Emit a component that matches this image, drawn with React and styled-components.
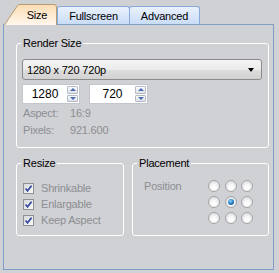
import React from 'react';
import styled, { createGlobalStyle } from 'styled-components';

const BG = '#d0d1d5';

const GlobalStyle = createGlobalStyle`
  html, body {
    margin: 0;
    padding: 0;
    background: ${BG};
  }
  body {
    font-family: "Liberation Sans", Arial, sans-serif;
    font-size: 11px;
    letter-spacing: -0.2px;
    color: #000;
  }
`;

const Window = styled.div`
  width: 279px;
  height: 273px;
  box-sizing: border-box;
  padding: 4px 0 0 3px;
  background: ${BG};
`;

const TabStrip = styled.div`
  position: relative;
  z-index: 1;
  display: flex;
  align-items: flex-end;
  height: 21px;
  margin-bottom: -1px;
  padding-left: 1px;
`;

const ActiveTab = styled.div`
  position: relative;
  width: 53px;
  height: 21px;
  box-sizing: border-box;
  padding-left: 13px;
  display: flex;
  align-items: center;
  justify-content: center;
  svg {
    position: absolute;
    left: 0;
    top: 0;
  }
  span {
    position: relative;
  }
`;

const Tab = styled.div`
  width: ${p => p.$w}px;
  height: 18px;
  margin-bottom: 1px;
  box-sizing: border-box;
  border: 1px solid #87a9dc;
  border-bottom: none;
  border-radius: 3px 3px 0 0;
  background: linear-gradient(#eaf1fd, #c9dcf7);
  display: flex;
  align-items: center;
  justify-content: center;
  & + & {
    margin-left: -1px;
  }
`;

const Panel = styled.div`
  width: 271px;
  height: 246px;
  box-sizing: border-box;
  border: 1px solid #7f9dc6;
  padding: 18px 4px 0 12px;
`;

const Group = styled.div`
  border: 1px solid #fff;
  border-radius: 3px;
  padding: ${p => p.$pad || '0 6px 8px 5px'};
  width: ${p => (p.$w ? `${p.$w}px` : 'auto')};
  flex: ${p => (p.$w ? 'none' : 1)};
  box-sizing: border-box;
`;

// indent is measured from the content box, so it may pull back over the padding
const GroupTitle = styled.div`
  margin: -8px 0 0 ${p => p.$indent}px;
  padding: 0 2px;
  width: fit-content;
  line-height: 14px;
  background: ${BG};
`;

const Select = styled.div`
  margin-top: 9px;
  height: 21px;
  box-sizing: border-box;
  border: 1px solid #8b8b8b;
  border-radius: 3px;
  background: linear-gradient(#f4f4f4, #ebebeb 50%, #dedede 50%, #d2d2d2);
  display: flex;
  align-items: center;
  justify-content: space-between;
  padding: 0 7px 0 4px;
`;

const DropArrow = styled.div`
  width: 0;
  height: 0;
  border-left: 3.5px solid transparent;
  border-right: 3.5px solid transparent;
  border-top: 4px solid #000;
`;

const SpinRow = styled.div`
  display: flex;
  gap: 9px;
  margin-top: 4px;
`;

const SpinBox = styled.div`
  display: flex;
  width: ${p => p.$w || 58}px;
  height: 20px;
  box-sizing: border-box;
  border: 1px solid #c3c6cc;
  background: #fff;
`;

const SpinInput = styled.div`
  flex: 1;
  display: flex;
  align-items: center;
  justify-content: center;
  font-size: 12px;
  letter-spacing: 0;
`;

const SpinButtons = styled.div`
  width: 11px;
  display: flex;
  flex-direction: column;
  gap: 1px;
  padding: 1px 1px 1px 0;
`;

const SpinButton = styled.div`
  flex: 1;
  border: 1px solid #b6bac2;
  border-radius: 1px;
  background: linear-gradient(#f9fafc, #dde2ea);
  display: flex;
  align-items: center;
  justify-content: center;
`;

const SpinArrow = styled.div`
  width: 0;
  height: 0;
  border-left: 3px solid transparent;
  border-right: 3px solid transparent;
  ${p => (p.$down ? 'border-top: 3px solid #4a6cb3;' : 'border-bottom: 3px solid #4a6cb3;')}
`;

const InfoRows = styled.div`
  margin-top: 1px;
  padding-left: 1px;
  display: grid;
  grid-template-columns: 47px auto;
  line-height: 17px;
  color: #8c8e92;
`;

const BottomRow = styled.div`
  display: flex;
  gap: 8px;
  margin-top: 15px;
  align-items: stretch;
`;

const CheckList = styled.div`
  margin-top: 10px;
`;

const CheckRow = styled.div`
  display: flex;
  align-items: center;
  gap: 7px;
  height: 16px;
  color: #8c8e92;
`;

const Box = styled.div`
  width: 11px;
  height: 11px;
  box-sizing: border-box;
  border: 1px solid #8e8f8f;
  background: linear-gradient(135deg, #d8d9db, #fbfbfb);
  display: flex;
  svg {
    display: block;
  }
`;

const PlacementBody = styled.div`
  display: flex;
  align-items: flex-start;
  margin-top: 8px;
  color: #8c8e92;
`;

const PosLabel = styled.div`
  line-height: 16px;
`;

const RadioGrid = styled.div`
  margin-left: auto;
  display: grid;
  grid-template-columns: repeat(3, 12px);
  grid-auto-rows: 16px;
  column-gap: 4.5px;
  align-items: center;
`;

const Radio = styled.div`
  width: 12px;
  height: 12px;
  box-sizing: border-box;
  border-radius: 50%;
  border: 1px solid #a3a4a6;
  background: radial-gradient(circle at 50% 65%, #fdfdfd 20%, #d9dadc 90%);
  display: flex;
  align-items: center;
  justify-content: center;
`;

const Dot = styled.div`
  width: 6px;
  height: 6px;
  border-radius: 50%;
  background: radial-gradient(circle at 40% 35%, #8fd6ff, #1e78bd 55%, #0b3f6e);
`;

function CheckBox({ label }) {
  return (
    <CheckRow>
      <Box>
        <svg width="9" height="9" viewBox="0 0 9 9">
          <path d="M1.5 4.5 L3.5 6.8 L7.6 1.6" fill="none" stroke="#3a4fa3" strokeWidth="1.7" />
        </svg>
      </Box>
      {label}
    </CheckRow>
  );
}

function Spinner({ value, w }) {
  return (
    <SpinBox $w={w}>
      <SpinInput>{value}</SpinInput>
      <SpinButtons>
        <SpinButton><SpinArrow /></SpinButton>
        <SpinButton><SpinArrow $down /></SpinButton>
      </SpinButtons>
    </SpinBox>
  );
}

export default function App() {
  const cells = [0, 1, 2, 3, 4, 5, 6, 7, 8];
  return (
    <Window>
      <GlobalStyle />
      <TabStrip>
        <ActiveTab>
          <svg width="53" height="21" viewBox="0 0 53 21">
            <defs>
              <linearGradient id="peach" x1="0" y1="0" x2="0" y2="1">
                <stop offset="0" stopColor="#fbdcb3" />
                <stop offset="1" stopColor="#fff7ed" />
              </linearGradient>
            </defs>
            <path d="M0 21 L13.5 1.5 Q14.5 0.5 16 0.5 L50 0.5 Q52.5 0.5 52.5 3 L52.5 21 Z" fill="url(#peach)" />
            <path d="M0.5 21 L13.5 1.5 Q14.5 0.5 16 0.5 L50 0.5 Q52.5 0.5 52.5 3 L52.5 21" fill="none" stroke="#b39c73" />
          </svg>
          <span>Size</span>
        </ActiveTab>
        <Tab $w={73}>Fullscreen</Tab>
        <Tab $w={71}>Advanced</Tab>
      </TabStrip>
      <Panel>
        <Group>
          <GroupTitle $indent={-1}>Render Size</GroupTitle>
          <Select>
            <span>1280 x 720 720p</span>
            <DropArrow />
          </Select>
          <SpinRow>
            <Spinner value="1280" w={58} />
            <Spinner value="720" w={59} />
          </SpinRow>
          <InfoRows>
            <span>Aspect:</span>
            <span>16:9</span>
            <span>Pixels:</span>
            <span>921.600</span>
          </InfoRows>
        </Group>
        <BottomRow>
          <Group $w={108} $pad="0 4px 7px 6px">
            <GroupTitle $indent={-2}>Resize</GroupTitle>
            <CheckList>
              <CheckBox label="Shrinkable" />
              <CheckBox label="Enlargable" />
              <CheckBox label="Keep Aspect" />
            </CheckList>
          </Group>
          <Group $pad="0 15px 9px 11px">
            <GroupTitle $indent={-7}>Placement</GroupTitle>
            <PlacementBody>
              <PosLabel>Position</PosLabel>
              <RadioGrid>
                {cells.map(i => (
                  <Radio key={i}>{i === 4 && <Dot />}</Radio>
                ))}
              </RadioGrid>
            </PlacementBody>
          </Group>
        </BottomRow>
      </Panel>
    </Window>
  );
}
